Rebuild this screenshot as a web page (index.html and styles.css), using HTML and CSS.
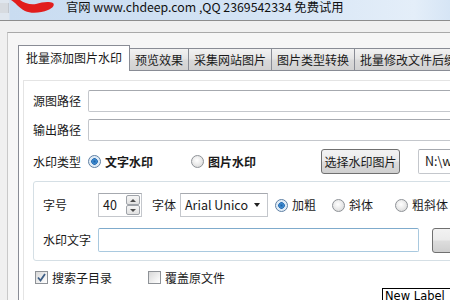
FILE: index.html
```html
<!DOCTYPE html>
<html lang="zh-CN">
<head>
  <meta charset="UTF-8">
  <title>批量添加图片水印</title>
  <link rel="stylesheet" href="styles.css">
</head>
<body>

  <!-- title bar -->
  <div class="titlebar">
    <span class="sysicon"></span>
    <svg class="scribble" width="44" height="14" viewBox="0 0 44 14">
      <path d="M0 0 C4 2 8 8 14 11 C20 14 30 13 37 10 C42 8 44 5 42 3 C38 1 31 2 25 4 C19 5 13 3 9 0 Z" fill="#e11d1d"/>
    </svg>
    <span class="title">官网 www.chdeep.com ,QQ 2369542334 免费试用</span>
  </div>
  <div class="strip"></div>

  <div class="frame">
    <div class="tabs">
      <div class="tab active">批量添加图片水印</div>
      <div class="tab">预览效果</div>
      <div class="tab">采集网站图片</div>
      <div class="tab">图片类型转换</div>
      <div class="tab">批量修改文件后缀</div>
    </div>

    <div class="page">
      <div class="panel">
        <div class="row first">
          <span class="lbl">源图路径</span>
          <div class="textbox path"></div>
        </div>
        <div class="row second">
          <span class="lbl">输出路径</span>
          <div class="textbox path"></div>
        </div>
        <div class="row third">
          <span class="lbl">水印类型</span>
          <div class="opt opt-text"><span class="radio on"></span><b>文字水印</b></div>
          <div class="opt opt-pic"><span class="radio"></span><b>图片水印</b></div>
          <div class="button pick">选择水印图片</div>
          <div class="textbox file">N:\w</div>
        </div>

        <!-- text watermark settings -->
        <div class="group">
          <div class="row font-row">
            <span class="lbl">字号</span>
            <div class="spin">
              <span class="spin-val">40</span>
              <div class="spin-btns">
                <span class="spin-btn"><i class="up"></i></span>
                <span class="spin-btn"><i class="down"></i></span>
              </div>
            </div>
            <span class="lbl-font">字体</span>
            <div class="combo"><span class="combo-val">Arial Unico</span><i class="arrow"></i></div>
            <div class="opt opt-bold"><span class="radio on"></span>加粗</div>
            <div class="opt opt-italic"><span class="radio"></span>斜体</div>
            <div class="opt"><span class="radio"></span>粗斜体</div>
          </div>
          <div class="row text-row">
            <span class="lbl">水印文字</span>
            <div class="textbox wmtext"></div>
            <div class="button more"></div>
          </div>
        </div>

        <div class="row checks">
          <div class="opt opt-sub">
            <span class="check on">
              <svg width="9" height="9" viewBox="0 0 9 9"><path d="M1 4.5 L3.5 7.5 L8 1" fill="none" stroke="#3d5e86" stroke-width="1.8"/></svg>
            </span>搜索子目录
          </div>
          <div class="opt"><span class="check"></span>覆盖原文件</div>
        </div>

        <div class="newlabel">New Label</div>
      </div>
    </div>
  </div>

</body>
</html>
```

FILE: styles.css
```css
html, body {
  margin: 0;
  padding: 0;
  width: 450px;
  height: 300px;
  overflow: hidden;
}

body {
  background: #f0f0f0;
  font-family: "Noto Sans CJK SC", sans-serif;
  font-size: 12px;
  line-height: 16px;
  color: #1a1a1a;
}

/* title bar */
.titlebar {
  height: 20px;
  display: flex;
  align-items: flex-start;
  background: linear-gradient(to right, #dfe6ee 0, #dfe6ee 9px, #c9dcf1 10px, #d3e3f4 55%, #e4eef9 92%, #d6e5f5 100%);
}

.sysicon {
  width: 8px;
  height: 10px;
  margin-top: 3px;
  background: #d7dbe0;
  border-right: 1px solid #c3c8cf;
}

.scribble {
  margin-left: 2px;
}

.title {
  margin-left: 11px;
  line-height: 15px;
  font-size: 12.3px;
  color: #111;
  white-space: nowrap;
}

.strip {
  height: 11px;
  border-top: 1px solid #8d8d8d;
  background: #f0f0f0;
}

.frame {
  width: 700px;
  margin-left: 7px;
  padding: 12px 0 0 10px;
  border-top: 1px solid #a9a9a9;
  border-left: 1px solid #c9c9c9;
  background: #f6f6f6;
  height: 300px;
}

/* tabs */
.tabs {
  display: flex;
  align-items: flex-end;
  height: 25px;
}

.tab {
  height: 22px;
  line-height: 22px;
  padding: 0 5px;
  border: 1px solid #898c95;
  border-left: none;
  border-bottom: none;
  box-sizing: border-box;
  background: linear-gradient(#f2f2f2, #e5e5e5 45%, #d9d9d9 55%, #d1d1d1);
  white-space: nowrap;
}

.tab.active {
  height: 26px;
  line-height: 24px;
  padding: 0 7px;
  margin-bottom: -1px;
  border-left: 1px solid #898c95;
  background: #fff;
  position: relative;
  z-index: 1;
}

.page {
  border-top: 1px solid #898c95;
  border-left: 1px solid #898c95;
  background: #fff;
  height: 260px;
}

.panel {
  margin: 9px 0 0 4px;
  border-top: 1px solid #e4e4e4;
  border-left: 1px solid #e4e4e4;
  padding-left: 9px;
  height: 240px;
}

/* rows */
.row {
  display: flex;
  align-items: center;
}

.row.first { margin-top: 9px; }
.row.second { margin-top: 7px; }
.row.third { margin-top: 8px; height: 25px; }

.lbl {
  width: 55px;
  flex: none;
}

.textbox {
  box-sizing: border-box;
  border: 1px solid #c4c7cc;
  border-top-color: #a6a9af;
  border-radius: 2px;
  background: #fff;
  padding-left: 6px;
  line-height: 22px;
  white-space: nowrap;
}

.textbox.path {
  width: 600px;
  height: 22px;
}

.textbox.file {
  width: 120px;
  height: 25px;
  margin-left: 18px;
  font-size: 12.5px;
}

.textbox.wmtext {
  width: 321px;
  height: 24px;
  border-color: #a9c9df;
  border-top-color: #7fabcc;
}

.opt {
  display: flex;
  align-items: center;
  white-space: nowrap;
  flex: none;
}

.opt .radio,
.opt .check {
  margin-right: 4px;
}

.opt b {
  font-weight: bold;
}

.opt-text { width: 103px; }
.opt-pic { width: 130px; }
.opt-bold { width: 57px; margin-left: 7px; }
.opt-italic { width: 63px; }
.opt-sub { width: 113px; }

.radio {
  width: 13px;
  height: 13px;
  box-sizing: border-box;
  border-radius: 50%;
  border: 1px solid #8e9297;
  background: radial-gradient(circle at 45% 40%, #ffffff 0, #eeeeee 40%, #d2d2d2 100%);
  flex: none;
}

.radio.on {
  border-color: #5e7fa3;
  background: radial-gradient(circle at 50% 50%, #1e62a8 0, #3d8bd0 2px, #2a6eb4 3px, #d9e8f5 3.6px, #f4f8fc 100%);
}

.check {
  width: 13px;
  height: 13px;
  box-sizing: border-box;
  border: 1px solid #8e9297;
  background: linear-gradient(135deg, #d8d8d8, #f4f4f4 70%, #fff);
  display: flex;
  align-items: center;
  justify-content: center;
  flex: none;
}

.button {
  box-sizing: border-box;
  height: 25px;
  line-height: 23px;
  text-align: center;
  border: 1px solid #707070;
  border-radius: 3px;
  background: linear-gradient(#f2f2f2, #ebebeb 48%, #dddddd 52%, #cfcfcf);
  white-space: nowrap;
}

.button.pick {
  width: 79px;
}

.button.more {
  width: 60px;
  height: 25px;
  margin-left: 13px;
}

/* group box */
.group {
  margin-top: 7px;
  border: 1px solid #d5dfe5;
  border-radius: 3px;
  padding: 0 0 8px 9px;
  width: 600px;
}

.font-row { margin-top: 11px; height: 24px; }
.text-row { margin-top: 11px; height: 24px; }

.spin {
  width: 44px;
  height: 24px;
  box-sizing: border-box;
  border: 1px solid #c4c7cc;
  border-top-color: #a6a9af;
  display: flex;
  justify-content: space-between;
  flex: none;
}

.spin-val {
  padding-left: 4px;
  line-height: 22px;
  font-size: 12.5px;
}

.spin-btns {
  display: flex;
  flex-direction: column;
  width: 14px;
  margin: 1px 1px 1px 0;
}

.spin-btn {
  flex: 1;
  border: 1px solid #9fa3a9;
  border-radius: 2px;
  background: linear-gradient(#f6f6f6, #e1e1e1);
  display: flex;
  align-items: center;
  justify-content: center;
}

.spin-btn i {
  width: 0;
  height: 0;
  border-left: 3px solid transparent;
  border-right: 3px solid transparent;
}

.spin-btn .up { border-bottom: 3px solid #4d4d4d; }
.spin-btn .down { border-top: 3px solid #4d4d4d; }

.lbl-font {
  margin-left: 10px;
  width: 24px;
  flex: none;
}

.combo {
  margin-left: 4px;
  width: 88px;
  height: 24px;
  box-sizing: border-box;
  border: 1px solid #c4c7cc;
  border-top-color: #a6a9af;
  display: flex;
  align-items: center;
  padding-left: 4px;
  flex: none;
}

.combo-val {
  width: 63px;
  white-space: nowrap;
  font-size: 12.5px;
}

.arrow {
  margin-left: 6px;
  width: 0;
  height: 0;
  border-left: 3.5px solid transparent;
  border-right: 3.5px solid transparent;
  border-top: 4px solid #222;
}

.checks {
  margin: 10px 0 0 2px;
  height: 13px;
}

.newlabel {
  margin: 4px 0 0 349px;
  width: 100px;
  height: 20px;
  border: 1px solid #000;
  background: #fff;
  color: #000;
  padding-left: 2px;
  line-height: 14px;
  font-family: "DejaVu Sans", sans-serif;
  font-size: 11.5px;
}
```
